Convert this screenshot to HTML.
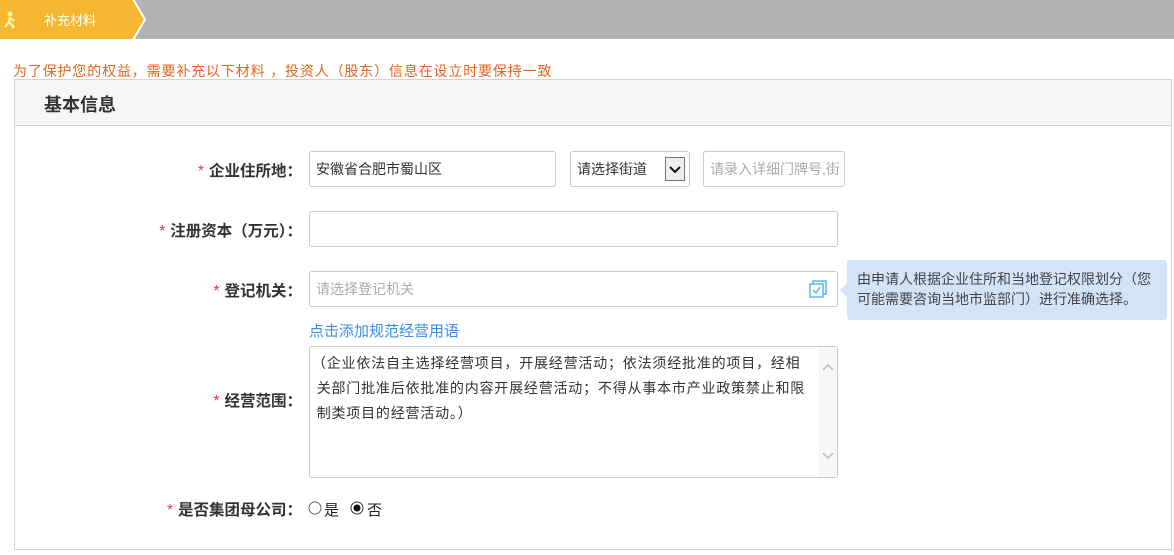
<!DOCTYPE html>
<html><head><meta charset="utf-8"><style>
*{margin:0;padding:0;box-sizing:border-box}
body{width:1174px;height:555px;background:#fff;position:relative;overflow:hidden;font-family:"Liberation Sans","Noto Sans CJK SC",sans-serif;font-size:14px;color:#333}
.a{position:absolute}
.inp{position:absolute;border:1px solid #c9c9c9;border-radius:3px;background:#fff;font-size:14px;line-height:34px;padding-left:6px;height:36px}
.lbl{position:absolute;font-weight:bold;font-size:15.5px;color:#333;text-align:right;white-space:nowrap}
.lbl i{color:#e4393c;font-style:normal;font-weight:normal;margin-right:5px}
</style></head><body>
<div class="a" style="left:0;top:0;width:1174px;height:39px;background:#b3b3b3"></div>
<div class="a" style="left:0;top:0;width:133px;height:39px;background:#f5b731"></div>
<svg class="a" style="left:126px;top:0" width="22" height="39"><polygon points="0,0 8,0 20,19.5 8,39 0,39" fill="#f5b731"/><polyline points="7,-1 19,19.5 7,40" fill="none" stroke="#fff" stroke-width="2"/></svg>
<svg class="a" style="left:2px;top:11px" width="16" height="18"><circle cx="8" cy="3" r="2.5" fill="#fff3a0"/><path d="M8 6 L7 11 L3 16 M7 11 L10 14 L12 17 M8 7 L12 10" stroke="#fff3a0" stroke-width="2.5" fill="none"/></svg>
<div class="a" style="left:44px;top:10px;color:#fff;font-size:13px">补充材料</div>
<div class="a" style="left:13px;top:61px;color:#e5641f;font-size:14px;letter-spacing:0.85px">为了保护您的权益，需要补充以下材料 ，投资人（股东）信息在设立时要保持一致</div>
<div class="a" style="left:14px;top:79px;width:1158px;height:471px;border:1px solid #d3d3d3"></div>
<div class="a" style="left:15px;top:80px;width:1156px;height:46px;background:#f5f6f8;border-bottom:1px solid #d3d3d3"></div>
<div class="a" style="left:44px;top:91px;font-size:18px;font-weight:bold;color:#333">基本信息</div>

<div class="lbl" style="right:872px;top:159px"><i>*</i>企业住所地：</div>
<div class="inp" style="left:309px;top:151px;width:247px;color:#333">安徽省合肥市蜀山区</div>
<div class="inp" style="left:570px;top:151px;width:120px;color:#333">请选择街道</div>
<div class="a" style="left:665px;top:157px;width:20px;height:24px;border:1px solid #777;background:#eee"><svg width="18" height="22"><path d="M4 9 L9 14 L14 9" stroke="#111" stroke-width="2" fill="none"/></svg></div>
<div class="inp" style="left:703px;top:151px;width:142px;color:#aaa;overflow:hidden;white-space:nowrap">请录入详细门牌号,街</div>

<div class="lbl" style="right:872px;top:219px"><i>*</i>注册资本（万元）：</div>
<div class="inp" style="left:309px;top:211px;width:529px"></div>

<div class="lbl" style="right:872px;top:279px"><i>*</i>登记机关：</div>
<div class="inp" style="left:309px;top:271px;width:529px;color:#aaa">请选择登记机关</div>
<svg class="a" style="left:808px;top:279px" width="20" height="20"><rect x="5" y="2" width="13" height="13" fill="none" stroke="#5bb5e6" stroke-width="1.5"/><rect x="2" y="5" width="13" height="13" fill="#fff" stroke="#5bb5e6" stroke-width="1.5"/><path d="M5 11 L8 14 L12 8" stroke="#5bb5e6" stroke-width="1.5" fill="none"/></svg>
<div class="a" style="left:847px;top:260px;width:320px;height:60px;background:#d3e3f8;border-radius:3px;padding:9px 10px;font-size:14px;line-height:20px;color:#444;white-space:nowrap">由申请人根据企业住所和当地登记权限划分（您<br>可能需要咨询当地市监部门）进行准确选择。</div>
<svg class="a" style="left:840px;top:282px" width="8" height="16"><polygon points="8,0 0,8 8,16" fill="#d3e3f8"/></svg>

<div class="a" style="left:309px;top:320px;color:#3a8ee6;font-size:15px">点击添加规范经营用语</div>
<div class="lbl" style="right:872px;top:389px"><i>*</i>经营范围：</div>
<div class="a" style="left:309px;top:346px;width:529px;height:132px;border:1px solid #c9c9c9;border-radius:3px;padding:4px 0 0 2px;font-size:14px;line-height:25px;color:#333;white-space:nowrap;letter-spacing:0.8px">（企业依法自主选择经营项目，开展经营活动；依法须经批准的项目，经相<br>&nbsp;关部门批准后依批准的内容开展经营活动；不得从事本市产业政策禁止和限<br>&nbsp;制类项目的经营活动。）</div>
<div class="a" style="left:819px;top:347px;width:18px;height:130px;background:#f7f7f7"></div>
<svg class="a" style="left:819px;top:358px" width="18" height="110"><path d="M4 12 L9 7 L14 12" stroke="#bbb" stroke-width="1.5" fill="none"/><path d="M4 95 L9 100 L14 95" stroke="#bbb" stroke-width="1.5" fill="none"/></svg>

<div class="lbl" style="right:872px;top:498px"><i>*</i>是否集团母公司：</div>
<svg class="a" style="left:308px;top:501px" width="14" height="14"><circle cx="7" cy="7" r="6" fill="#fff" stroke="#666"/></svg>
<div class="a" style="left:324px;top:499px;font-size:15px;color:#222">是</div>
<svg class="a" style="left:350px;top:501px" width="14" height="14"><circle cx="7" cy="7" r="6" fill="#fff" stroke="#333"/><circle cx="7" cy="7" r="3.5" fill="#111"/></svg>
<div class="a" style="left:367px;top:499px;font-size:15px;color:#222">否</div>
</body></html>
